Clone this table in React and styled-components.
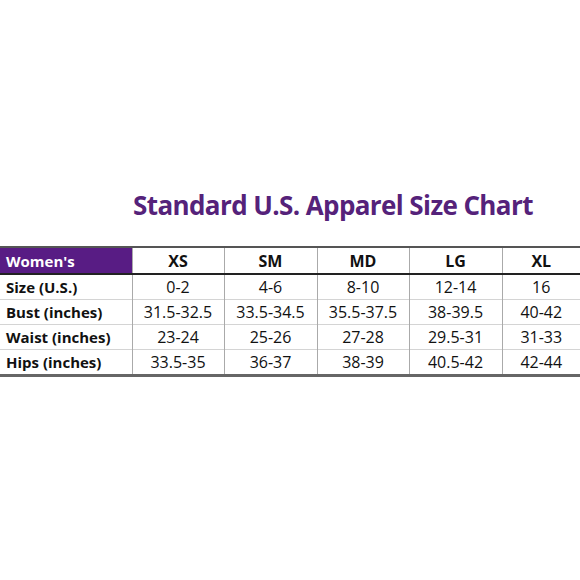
import React from 'react';
import styled, { createGlobalStyle } from 'styled-components';

const GlobalStyle = createGlobalStyle`
    html, body {
        margin: 0;
        padding: 0;
        background: #fff;
    }
    body {
        font-family: 'Open Sans', 'Liberation Sans', sans-serif;
        color: #111;
    }
`;

const Page = styled.div`
    width: 580px;
    height: 580px;
    display: flex;
    flex-direction: column;
    background: #fff;
`;

const Title = styled.h1`
    margin: 186px 0 0 133px;
    font-size: 26px;
    font-weight: 700;
    letter-spacing: -0.6px;
    color: #55227a;
    line-height: 38px;
`;

const Table = styled.table`
    margin-top: 22px;
    width: 580px;
    border-collapse: collapse;
    table-layout: fixed;
    border-top: 2px solid #555;
    border-bottom: 3px solid #666;
`;

const Col = styled.col`
    width: ${p => p.$w}px;
`;

const HeadCell = styled.th`
    height: 25px;
    padding: 0;
    font-size: ${p => (p.$first ? '15px' : '16px')};
    font-weight: 700;
    text-align: ${p => (p.$first ? 'left' : 'center')};
    padding-left: ${p => (p.$first ? '6px' : '0')};
    background: ${p => (p.$first ? '#581c84' : '#fff')};
    color: ${p => (p.$first ? '#fff' : '#111')};
    border-bottom: 2px solid #222;
    border-left: ${p => (p.$first ? 'none' : '1px solid #aaa')};
`;

const Cell = styled.td`
    height: 24px;
    padding: 0;
    font-size: ${p => (p.$first ? '15px' : '16px')};
    font-weight: ${p => (p.$first ? 700 : 400)};
    text-align: ${p => (p.$first ? 'left' : 'center')};
    padding-left: ${p => (p.$first ? '6px' : '0')};
    border-top: 1px solid #d4d4d4;
    border-left: ${p => (p.$first ? 'none' : '1px solid #aaa')};
    white-space: nowrap;
`;

const sizes = ['XS', 'SM', 'MD', 'LG', 'XL'];

const rows = [
    ['Size (U.S.)', '0-2', '4-6', '8-10', '12-14', '16'],
    ['Bust (inches)', '31.5-32.5', '33.5-34.5', '35.5-37.5', '38-39.5', '40-42'],
    ['Waist (inches)', '23-24', '25-26', '27-28', '29.5-31', '31-33'],
    ['Hips (inches)', '33.5-35', '36-37', '38-39', '40.5-42', '42-44'],
];

const App = () => {
    return (
        <Page>
            <GlobalStyle />
            <Title>Standard U.S. Apparel Size Chart</Title>
            <Table>
                <colgroup>
                    <Col $w={132} />
                    <Col $w={92} />
                    <Col $w={93} />
                    <Col $w={92} />
                    <Col $w={93} />
                    <Col $w={78} />
                </colgroup>
                <thead>
                    <tr>
                        <HeadCell $first>Women's</HeadCell>
                        {sizes.map(s => (
                            <HeadCell key={s}>{s}</HeadCell>
                        ))}
                    </tr>
                </thead>
                <tbody>
                    {rows.map(row => (
                        <tr key={row[0]}>
                            {row.map((v, i) => (
                                <Cell key={i} $first={i === 0}>
                                    {v}
                                </Cell>
                            ))}
                        </tr>
                    ))}
                </tbody>
            </Table>
        </Page>
    );
};

export default App;
